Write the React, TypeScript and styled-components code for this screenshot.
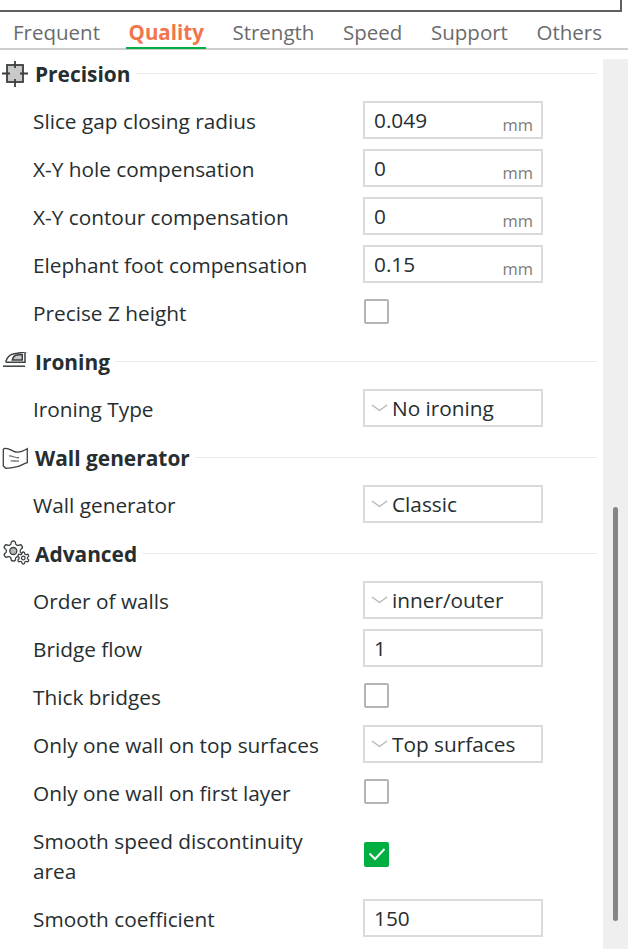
import React from "react";
import styled, { createGlobalStyle } from "styled-components";

const GlobalStyle = createGlobalStyle`
  html, body {
    margin: 0;
    padding: 0;
    background: #fff;
    font-family: "Open Sans", "Noto Sans", sans-serif;
  }
`;

const tabs = ["Frequent", "Quality", "Strength", "Speed", "Support", "Others"];

type Row =
  | { kind: "input"; label: string; value: string; unit?: string }
  | { kind: "select"; label: string; value: string }
  | { kind: "check"; label: string; checked?: boolean; tall?: boolean };

const gearPath =
  "M12.22 2h-.44a2 2 0 0 0-2 2v.18a2 2 0 0 1-1 1.73l-.43.25a2 2 0 0 1-2 0l-.15-.08a2 2 0 0 0-2.73.73l-.22.38a2 2 0 0 0 .73 2.73l.15.1a2 2 0 0 1 1 1.72v.51a2 2 0 0 1-1 1.74l-.15.09a2 2 0 0 0-.73 2.73l.22.38a2 2 0 0 0 2.73.73l.15-.08a2 2 0 0 1 2 0l.43.25a2 2 0 0 1 1 1.73V20a2 2 0 0 0 2 2h.44a2 2 0 0 0 2-2v-.18a2 2 0 0 1 1-1.73l.43-.25a2 2 0 0 1 2 0l.15.08a2 2 0 0 0 2.73-.73l.22-.39a2 2 0 0 0-.73-2.73l-.15-.08a2 2 0 0 1-1-1.74v-.5a2 2 0 0 1 1-1.74l.15-.09a2 2 0 0 0 .73-2.73l-.22-.38a2 2 0 0 0-2.73-.73l-.15.08a2 2 0 0 1-2 0l-.43-.25a2 2 0 0 1-1-1.73V4a2 2 0 0 0-2-2z";

const PrecisionIcon = () => (
  <svg width="26" height="26" viewBox="0 0 26 26" fill="none" stroke="#3a3f41" strokeWidth="1.8">
    <rect x="5" y="4" width="16" height="17" fill="#c9c9c9" />
    <path d="M13 0v7M13 18v8M0 12.500h8M18 12.500h8" />
  </svg>
);

const IronIcon = () => (
  <svg width="28" height="20" viewBox="0 2.500 28 20" fill="none" stroke="#3a3f41" strokeWidth="1.500">
    <path d="M3.700 12.300C5 8 8 5 12 4.300c5-.9 10-1.500 14.300-2.600" />
    <path d="M3.700 12.800H23V3.300" />
    <path d="M10.300 10.500c.5-2.500 1.500-4.200 3.400-4.800 2-.5 4.500-.7 6.600-.7v5.500h-10z" fill="#c9c9c9" />
    <path d="M1 16.700h22" />
  </svg>
);

const WallIcon = () => (
  <svg width="28" height="24" viewBox="0 0 28 24" fill="none" stroke="#3a3f41" strokeWidth="1.3">
    <path d="M2 2.700C6 1 9.500 5 13.700 6c4.300 1 8-1.200 11.600-3.300v14c-3.300.8-6.700 3-10 4-4 1-8 1.600-11.600 1.600L1.300 20V3.500z" />
    <path d="M7 10c3-.8 6 2.300 10 1.700M8.700 15c2.500-.4 5.500.4 8.300 0" stroke="#6f7375" />
  </svg>
);

const GearsIcon = () => (
  <svg width="30" height="28" viewBox="0 0 30 28" fill="none" stroke="#3a3f41">
    <g transform="translate(-.7 -1)" strokeWidth="1.300">
      <path d={gearPath} />
      <circle cx="12" cy="12" r="3.500" fill="#b9b9b9" />
    </g>
    <g transform="translate(14.100 10.800) scale(.6)" strokeWidth="2.100">
      <path d={gearPath} fill="#fff" />
      <circle cx="12" cy="12" r="3" />
    </g>
  </svg>
);

const sections: { title: string; icon: React.ReactNode; rows: Row[] }[] = [
  {
    title: "Precision",
    icon: <PrecisionIcon />,
    rows: [
      { kind: "input", label: "Slice gap closing radius", value: "0.049", unit: "mm" },
      { kind: "input", label: "X-Y hole compensation", value: "0", unit: "mm" },
      { kind: "input", label: "X-Y contour compensation", value: "0", unit: "mm" },
      { kind: "input", label: "Elephant foot compensation", value: "0.15", unit: "mm" },
      { kind: "check", label: "Precise Z height" }
    ]
  },
  {
    title: "Ironing",
    icon: <IronIcon />,
    rows: [{ kind: "select", label: "Ironing Type", value: "No ironing" }]
  },
  {
    title: "Wall generator",
    icon: <WallIcon />,
    rows: [{ kind: "select", label: "Wall generator", value: "Classic" }]
  },
  {
    title: "Advanced",
    icon: <GearsIcon />,
    rows: [
      { kind: "select", label: "Order of walls", value: "inner/outer" },
      { kind: "input", label: "Bridge flow", value: "1" },
      { kind: "check", label: "Thick bridges" },
      { kind: "select", label: "Only one wall on top surfaces", value: "Top surfaces" },
      { kind: "check", label: "Only one wall on first layer" },
      { kind: "check", label: "Smooth speed discontinuity area", checked: true, tall: true },
      { kind: "input", label: "Smooth coefficient", value: "150" }
    ]
  }
];

export default function App() {
  return (
    <Page>
      <GlobalStyle />
      <TopStrip />
      <TabBar>
        {tabs.map(t => (
          <Tab key={t} $active={t === "Quality"}>
            {t}
          </Tab>
        ))}
      </TabBar>
      <Body>
        <List>
          {sections.map(s => (
            <React.Fragment key={s.title}>
              <SectionHeader>
                <IconSlot>{s.icon}</IconSlot>
                <SectionTitle>{s.title}</SectionTitle>
                <Divider />
              </SectionHeader>
              {s.rows.map(r => (
                <OptionRow key={r.label} $tall={r.kind === "check" && r.tall}>
                  <Label>{r.label}</Label>
                  {r.kind === "input" && (
                    <Field>
                      <Value>{r.value}</Value>
                      {r.unit && <Unit>{r.unit}</Unit>}
                    </Field>
                  )}
                  {r.kind === "select" && (
                    <Field $select>
                      <svg width="18" height="8" viewBox="0 0 18 8" fill="none" stroke="#b5b5b5" strokeWidth="1.300">
                        <path d="M1 1l7.500 5.500L16 1" />
                      </svg>
                      <SelectValue>{r.value}</SelectValue>
                    </Field>
                  )}
                  {r.kind === "check" && (
                    <CheckBox $checked={r.checked}>
                      {r.checked && (
                        <svg width="18" height="14" viewBox="0 0 18 14" fill="none" stroke="#fff" strokeWidth="2">
                          <path d="M1.500 6.500l5.500 5.500L16.500 2" />
                        </svg>
                      )}
                    </CheckBox>
                  )}
                </OptionRow>
              ))}
            </React.Fragment>
          ))}
        </List>
        <Track>
          <Thumb />
        </Track>
      </Body>
    </Page>
  );
}

const Page = styled.div`
  width: 628px;
  height: 949px;
  overflow: hidden;
  background: #fff;
  color: #262e30;
`;

const TopStrip = styled.div`
  box-sizing: border-box;
  width: 622px;
  height: 12px;
  border-right: 2px solid #5f5f5f;
  border-bottom: 2px solid #5f5f5f;
`;

const TabBar = styled.div`
  box-sizing: border-box;
  height: 38px;
  display: flex;
  padding-left: 13px;
  gap: 28.6px;
  border-bottom: 2px solid #cecece;
`;

const Tab = styled.div<{ $active?: boolean }>`
  position: relative;
  font-size: 20.5px;
  line-height: 40px;
  height: 36px;
  font-weight: ${p => (p.$active ? 700 : 400)};
  color: ${p => (p.$active ? "#f2754e" : "#6b6b6b")};
  white-space: nowrap;
  ${p =>
    p.$active &&
    `
    &::after {
      content: "";
      position: absolute;
      left: -3px;
      right: -2px;
      bottom: -1px;
      height: 2px;
      background: #00ae42;
    }
  `}
`;

const Body = styled.div`
  display: flex;
  align-items: flex-start;
`;

const List = styled.div`
  box-sizing: border-box;
  width: 603px;
  padding: 3px 6px 0 0;
  display: flex;
  flex-direction: column;
  gap: 10px;
`;

const SectionHeader = styled.div`
  height: 38px;
  display: flex;
  align-items: center;
  padding-top: 4px;
  box-sizing: border-box;
`;

const IconSlot = styled.div`
  width: 35px;
  flex: none;
  display: flex;
  padding-left: 2px;
  box-sizing: border-box;
`;

const SectionTitle = styled.div`
  font-size: 20.9px;
  font-weight: 700;
  line-height: 28px;
  white-space: nowrap;
`;

const Divider = styled.div`
  flex: 1;
  height: 1px;
  background: #ececec;
  margin: 0 0 1px 5px;
`;

const OptionRow = styled.div<{ $tall?: boolean }>`
  display: grid;
  grid-template-columns: 330px 180px;
  align-items: center;
  padding-left: 33px;
  min-height: ${p => (p.$tall ? "68px" : "38px")};
`;

const Label = styled.div`
  font-size: 20.8px;
  line-height: 30px;
  width: 290px;
  margin-top: 1px;
`;

const Field = styled.div<{ $select?: boolean }>`
  box-sizing: border-box;
  height: 38px;
  width: 180px;
  border: 2px solid #dbdbdb;
  display: flex;
  align-items: center;
  padding-left: ${p => (p.$select ? "6px" : "9px")};
`;

const Value = styled.span`
  font-size: 20.8px;
  flex: 1;
`;

const SelectValue = styled.span`
  font-size: 20.8px;
  margin-left: 3px;
`;

const Unit = styled.span`
  font-size: 16.5px;
  color: #7c7c7c;
  margin: 8px 8px 0 0;
`;

const CheckBox = styled.div<{ $checked?: boolean }>`
  box-sizing: border-box;
  width: 25px;
  height: 25px;
  margin: 0 0 2px 1px;
  border-radius: 2px;
  display: flex;
  align-items: center;
  justify-content: center;
  background: ${p => (p.$checked ? "#00ae42" : "#fff")};
  border: ${p => (p.$checked ? "none" : "2px solid #b4b4b4")};
`;

const Track = styled.div`
  box-sizing: border-box;
  flex: none;
  width: 25px;
  height: 890px;
  margin-top: 9px;
  padding: 448px 0 0 10px;
  background: #efefef;
`;

const Thumb = styled.div`
  width: 5px;
  height: 414px;
  border-radius: 3px;
  background: #858585;
`;
